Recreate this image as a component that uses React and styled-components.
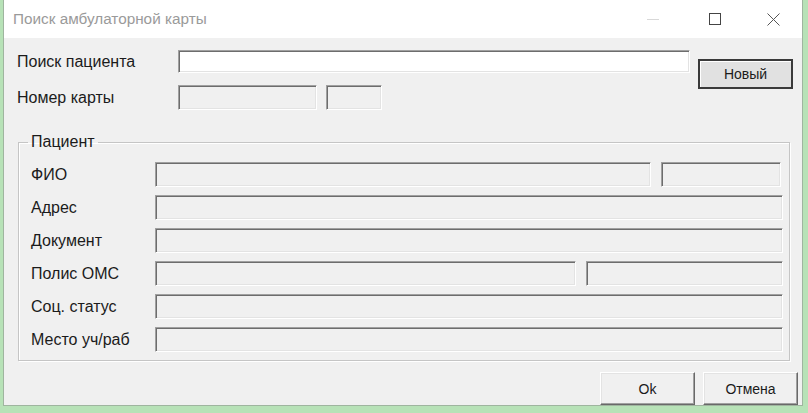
import React from 'react';
import styled, { createGlobalStyle } from 'styled-components';

const GlobalStyle = createGlobalStyle`
  html, body { margin: 0; padding: 0; }
  body {
    width: 808px; height: 413px; overflow: hidden;
    background: #b7e2b7;
    font-family: "Liberation Sans", Arial, sans-serif;
  }
`;

const Desktop = styled.div`
  width: 808px; height: 413px;
  padding: 0 5px 0 3px;
  box-sizing: border-box;
`;

const Window = styled.div`
  width: 800px; height: 406px;
  box-sizing: border-box;
  border: 1px solid #9fb59f;
  border-top: none;
  background: #f0f0f0;
  display: flex; flex-direction: column;
`;

const TitleBar = styled.div`
  height: 38px; background: #fff;
  display: flex; align-items: center;
  padding-left: 9px;
`;

const Title = styled.div`
  flex: 1;
  font-size: 15.3px; color: #9a9a9a;
  margin-top: -1px;
`;

const Caption = styled.div`
  width: 58px; height: 38px;
  display: flex; align-items: center; justify-content: center;
`;

const Body = styled.div`
  flex: 1;
  padding: 12px 0 0 13px;
  display: flex; flex-direction: column;
`;

const Top = styled.div`
  display: flex; align-items: flex-start;
`;

const TopFields = styled.div`
  display: flex; flex-direction: column; gap: 12px;
`;

const Row = styled.div`
  display: flex; align-items: center; gap: ${p => p.gap || 0}px;
`;

const Label = styled.div`
  width: ${p => p.w}px; flex: none;
  font-size: 16px; color: #1b1b1b;
  margin-top: 1px;
`;

const Input = styled.div`
  box-sizing: border-box;
  width: ${p => p.w ? `${p.w}px` : 'auto'};
  flex: ${p => p.w ? 'none' : 1};
  height: ${p => p.h || 25}px;
  background: ${p => p.white ? '#fff' : '#f0f0f0'};
  border: 1px solid;
  border-color: #a0a0a0 #fff #fff #a0a0a0;
  box-shadow: inset 1px 1px 0 #6d6d6d, inset -1px -1px 0 #e3e3e3;
`;

const NewButton = styled.button`
  width: 95px; height: 30px;
  margin: 9px 0 0 8px;
  background: #e1e1e1;
  border: 2px solid #3a3a3a;
  box-shadow: inset 1px 1px 0 #fff;
  font-family: inherit; font-size: 14px; color: #1b1b1b;
  padding: 0;
`;

const Group = styled.fieldset`
  margin: 24px 0 0 1px;
  width: 771px;
  box-sizing: border-box;
  padding: 12px 6px 8px 12px;
  border: 1px solid #c5c5c5;
  box-shadow: inset 1px 1px 0 #fff, 1px 1px 0 #fff;
  display: flex; flex-direction: column; gap: 8px;
`;

const Legend = styled.legend`
  font-size: 16px; color: #1b1b1b;
  padding: 0 3px;
  margin-left: -3px;
  line-height: 16px;
`;

const Footer = styled.div`
  display: flex; justify-content: flex-end; gap: 8px;
  margin-top: 11px; padding-right: 4px;
`;

const Button = styled.button`
  width: 95px; height: 33px;
  box-sizing: border-box;
  background: #f0f0f0;
  border: 1px solid;
  border-color: #fff #696969 #696969 #fff;
  box-shadow: inset -1px -1px 0 #a0a0a0, inset 1px 1px 0 #e3e3e3;
  font-family: inherit; font-size: 14px; color: #1b1b1b;
  padding: 0;
`;

const patient = [
  { label: 'ФИО', fields: [496, 120] },
  { label: 'Адрес', fields: [null] },
  { label: 'Документ', fields: [null] },
  { label: 'Полис ОМС', fields: [421, 197] },
  { label: 'Соц. статус', fields: [null] },
  { label: 'Место уч/раб', fields: [null] },
];

export default function App() {
  return (
    <Desktop>
      <GlobalStyle />
      <Window>
        <TitleBar>
          <Title>Поиск амбулаторной карты</Title>
          <Caption style={{ paddingRight: 4 }}>
            <svg width="12" height="12" viewBox="0 0 12 12"><path d="M0 6.5h12" stroke="#d8d8d8" strokeWidth="1" /></svg>
          </Caption>
          <Caption>
            <svg width="12" height="12" viewBox="0 0 12 12"><rect x="0.5" y="0.5" width="11" height="11" fill="none" stroke="#444" /></svg>
          </Caption>
          <Caption>
            <svg width="13" height="13" viewBox="0 0 13 13"><path d="M0.5 0.5l12 12M12.5 0.5l-12 12" stroke="#555" strokeWidth="1" /></svg>
          </Caption>
        </TitleBar>
        <Body>
          <Top>
            <TopFields>
              <Row>
                <Label w={161}>Поиск пациента</Label>
                <Input w={512} h={23} white />
              </Row>
              <Row gap={9}>
                <Label w={152}>Номер карты</Label>
                <Input w={139} />
                <Input w={56} />
              </Row>
            </TopFields>
            <NewButton>Новый</NewButton>
          </Top>
          <Group>
            <Legend>Пациент</Legend>
            {patient.map(r => (
              <Row key={r.label} gap={10}>
                <Label w={114}>{r.label}</Label>
                {r.fields.map((w, i) => <Input key={i} w={w} />)}
              </Row>
            ))}
          </Group>
          <Footer>
            <Button>Ok</Button>
            <Button>Отмена</Button>
          </Footer>
        </Body>
      </Window>
    </Desktop>
  );
}
